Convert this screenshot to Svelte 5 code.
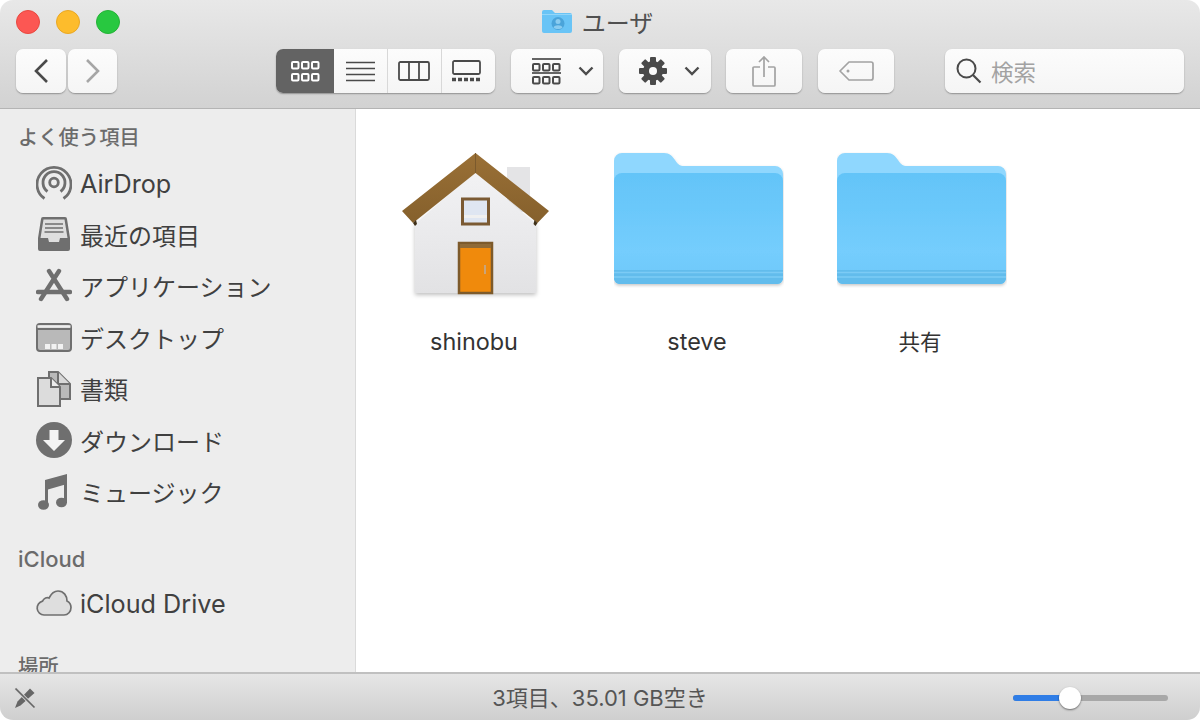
<script>
  const files = [
    { name: 'shinobu', kind: 'home', latin: true },
    { name: 'steve', kind: 'folder', latin: true },
    { name: '共有', kind: 'folder', latin: false }
  ];
</script>

{#snippet grid(y, fill)}
  <g fill={fill} stroke="currentColor" stroke-width="2">
    <rect x="1" y={y} width="6.5" height="6.5" rx="1" />
    <rect x="11" y={y} width="6.5" height="6.5" rx="1" />
    <rect x="21" y={y} width="6.5" height="6.5" rx="1" />
  </g>
{/snippet}

{#snippet chevron()}
  <svg class="chev" width="16" height="10" viewBox="0 0 16 10"><path d="M1.5 1.5 8 8l6.500-6.500" fill="none" stroke="#4c4c4c" stroke-width="2.400" /></svg>
{/snippet}

<div class="window">
  <header class="toolbar">
    <div class="titlerow">
      <div class="lights">
        <span class="light red"></span>
        <span class="light yellow"></span>
        <span class="light green"></span>
      </div>
      <div class="title">
        <svg width="32" height="26" viewBox="0 0 32 26">
          <path d="M1 4a2 2 0 0 1 2-2h8l3 3h15a2 2 0 0 1 2 2v16a2 2 0 0 1-2 2H3a2 2 0 0 1-2-2z" fill="#69c4f6" />
          <path d="M1 6h30v1H1z" fill="#93d6f9" />
          <circle cx="17" cy="15.500" r="6.500" fill="#4aa4da" />
          <circle cx="17" cy="13.500" r="2.500" fill="#8accf0" />
          <path d="M12.500 19.500c1-3 8-3 9 0-2 2-7 2-9 0z" fill="#8accf0" />
        </svg>
        <span>ユーザ</span>
      </div>
    </div>
    <div class="tools">
      <div class="navs">
        <button class="btn nav" aria-label="戻る">
          <svg width="16" height="26" viewBox="0 0 16 26"><path d="M14 2 3 13l11 11" fill="none" stroke="#4a4a4a" stroke-width="2.600" /></svg>
        </button>
        <button class="btn nav" aria-label="進む">
          <svg width="16" height="26" viewBox="0 0 16 26"><path d="M2 2l11 11L2 24" fill="none" stroke="#a6a6a6" stroke-width="2.600" /></svg>
        </button>
      </div>
      <div class="segments">
        <button class="seg active" aria-label="アイコン">
          <svg width="29" height="23" viewBox="0 0 29 23" color="#fff">
            {@render grid(2, 'none')}
            {@render grid(14, 'none')}
          </svg>
        </button>
        <button class="seg s2" aria-label="リスト">
          <svg width="29" height="21" viewBox="0 0 29 21"><path d="M0 1.500h29M0 7.500h29M0 13.500h29M0 19.500h29" stroke="#4a4a4a" stroke-width="1.700" /></svg>
        </button>
        <button class="seg s3" aria-label="カラム">
          <svg width="32" height="20" viewBox="0 0 32 20"><rect x="1" y="1" width="30" height="18" rx="1.500" fill="none" stroke="#4a4a4a" stroke-width="1.800" /><path d="M11 1v18M21 1v18" stroke="#4a4a4a" stroke-width="1.800" /></svg>
        </button>
        <button class="seg s4" aria-label="ギャラリー">
          <svg width="29" height="22" viewBox="0 0 29 22"><rect x="1" y="1" width="27" height="13" rx="1.500" fill="none" stroke="#4a4a4a" stroke-width="1.800" /><path d="M0 19.500h29" stroke="#4a4a4a" stroke-width="3.400" stroke-dasharray="4 2" /></svg>
        </button>
      </div>
      <button class="btn pop arrange" aria-label="グループ">
        <svg width="29" height="27" viewBox="0 0 29 27" color="#4a4a4a">
          <path d="M0 1h29" stroke="#4a4a4a" stroke-width="1.700" />
          {@render grid(6, 'none')}
          <path d="M0 15h29" stroke="#4a4a4a" stroke-width="1.700" />
          {@render grid(19, 'none')}
        </svg>
        {@render chevron()}
      </button>
      <button class="btn pop action" aria-label="アクション">
        <svg width="28" height="28" viewBox="0 0 28 28">
          <g fill="#4a4a4a">
            <circle cx="14" cy="14" r="10" />
            <rect x="11" y="0" width="6" height="28" rx="1" />
            <rect x="11" y="0" width="6" height="28" rx="1" transform="rotate(45 14 14)" />
            <rect x="11" y="0" width="6" height="28" rx="1" transform="rotate(90 14 14)" />
            <rect x="11" y="0" width="6" height="28" rx="1" transform="rotate(135 14 14)" />
          </g>
          <circle cx="14" cy="14" r="4" fill="#fafafa" />
        </svg>
        {@render chevron()}
      </button>
      <button class="btn share" aria-label="共有">
        <svg width="24" height="31" viewBox="0 0 24 31"><path d="M8 11H2a1 1 0 0 0-1 1v17a1 1 0 0 0 1 1h20a1 1 0 0 0 1-1V12a1 1 0 0 0-1-1h-6M12 21V1.500M7 6l5-5 5 5" fill="none" stroke="#a3a3a3" stroke-width="1.700" /></svg>
      </button>
      <button class="btn tag" aria-label="タグ">
        <svg width="35" height="20" viewBox="0 0 35 20"><path d="M10 1h22a2 2 0 0 1 2 2v14a2 2 0 0 1-2 2H10L1 10z" fill="none" stroke="#a3a3a3" stroke-width="1.700" stroke-linejoin="round" /><circle cx="9" cy="10" r="1.500" fill="#a3a3a3" /></svg>
      </button>
      <div class="search">
        <svg width="26" height="26" viewBox="0 0 26 26"><circle cx="10.500" cy="10.500" r="9" fill="none" stroke="#4a4a4a" stroke-width="2" /><path d="M17 17l7.500 7.500" stroke="#4a4a4a" stroke-width="2.200" /></svg>
        <span>検索</span>
      </div>
    </div>
  </header>

  <div class="body">
    <aside class="sidebar">
      <h2 class="first">よく使う項目</h2>
      <ul>
        <li>
          <svg width="36" height="36" viewBox="0 0 36 36" fill="none" stroke="#6f6f6f" stroke-width="2.800">
            <path d="M8.500 33.500a17 17 0 1 1 19 0" />
            <path d="M11.500 26.500a11 11 0 1 1 13 0" />
            <circle cx="18" cy="17.500" r="4.300" />
          </svg>
          <span class="latin">AirDrop</span>
        </li>
        <li>
          <svg width="36" height="36" viewBox="0 0 36 36">
            <path d="M7 1h22a2 2 0 0 1 2 2l3 19v11a2 2 0 0 1-2 2H4a2 2 0 0 1-2-2V22L5 3a2 2 0 0 1 2-2z" fill="#6f6f6f" />
            <path d="M7.500 3.500h21L31.500 22H24l-1 4H13l-1-4H4.500z" fill="#dedede" />
            <path d="M9 8h18M9 12h18M8.500 16h19" stroke="#6f6f6f" stroke-width="1.600" />
          </svg>
          <span>最近の項目</span>
        </li>
        <li>
          <svg width="36" height="36" viewBox="0 0 36 36" fill="none" stroke="#6f6f6f" stroke-linecap="round">
            <path d="M13 3l18 28M23 3 5 31" stroke-width="4.400" />
            <path d="M2 24h32" stroke-width="4.400" />
          </svg>
          <span>アプリケーション</span>
        </li>
        <li>
          <svg width="36" height="29" viewBox="0 0 36 29">
            <rect x="1" y="1" width="34" height="27" rx="3" fill="#b9b9b9" stroke="#6f6f6f" stroke-width="2" />
            <path d="M1 6h34" stroke="#6f6f6f" stroke-width="2" />
            <path d="M1.500 3.500h33" stroke="#ededed" stroke-width="2.500" />
            <rect x="9" y="21" width="5" height="5" fill="#f2f2f2" />
            <rect x="15.500" y="21" width="5" height="5" fill="#f2f2f2" />
            <rect x="22" y="21" width="5" height="5" fill="#f2f2f2" />
          </svg>
          <span>デスクトップ</span>
        </li>
        <li>
          <svg width="36" height="36" viewBox="0 0 36 36" stroke="#6f6f6f" stroke-width="2">
            <path d="M13 1h9l12 12v15H22V15H13z" fill="#b9b9b9" />
            <path d="M22 1v12h12" fill="#d8d8d8" />
            <path d="M2 7h13l9 9v19H2z" fill="#dcdcdc" />
            <path d="M15 7v9h9" fill="#ededed" />
          </svg>
          <span>書類</span>
        </li>
        <li>
          <svg width="36" height="36" viewBox="0 0 36 36">
            <circle cx="18" cy="18" r="18" fill="#6f6f6f" />
            <path d="M13.500 8h9v10h6.500L18 29 7 18h6.500z" fill="#f4f4f4" />
          </svg>
          <span>ダウンロード</span>
        </li>
        <li>
          <svg width="36" height="36" viewBox="0 0 36 36" fill="#6f6f6f">
            <path d="M9 6 31 0v10L12 15.500V32H9z" />
            <path d="M28 2h3v27h-3z" />
            <ellipse cx="7.500" cy="31" rx="5.500" ry="4.800" />
            <ellipse cx="25.500" cy="28.500" rx="5.500" ry="4.800" />
          </svg>
          <span>ミュージック</span>
        </li>
      </ul>
      <h2 class="cloud">iCloud</h2>
      <ul>
        <li class="drive">
          <svg width="36" height="26" viewBox="0 0 36 26"><path d="M8 25a7 7 0 0 1-1.500-13.800C8 8 11 7 13 8c2-4 5-7 9-7 6 0 9 5 9 10 3 1.500 4 4 4 6.500 0 4-3 7.500-7 7.500z" fill="#dedede" stroke="#6f6f6f" stroke-width="1.700" /></svg>
          <span class="latin">iCloud Drive</span>
        </li>
      </ul>
      <h2 class="places">場所</h2>
    </aside>

    <main class="content">
      {#each files as f}
        <figure class="file">
          <div class="icon">
            {#if f.kind === 'home'}
              <svg class="house" width="150" height="148" viewBox="0 0 150 148">
                <defs>
                  <linearGradient id="wall" x1="0" y1="0" x2="0" y2="1"><stop offset="0" stop-color="#f2f2f4" /><stop offset="1" stop-color="#e2e2e4" /></linearGradient>
                  <linearGradient id="roof" x1="0" y1="0" x2="0" y2="1"><stop offset="0" stop-color="#9a7036" /><stop offset="1" stop-color="#85602c" /></linearGradient>
                  <filter id="hs" x="-10%" y="-10%" width="120%" height="120%"><feDropShadow dx="0" dy="2" stdDeviation="2" flood-opacity="0.250" /></filter>
                </defs>
                <rect x="107" y="15" width="23" height="45" fill="#e4e4e6" />
                <path d="M75 20 136 72v69H15V72z" fill="url(#wall)" filter="url(#hs)" />
                <path d="M75.500 1 149 59l-11.500 12L75.500 21 13 71 2 59z" fill="url(#roof)" />
                <path d="M75.500 1v20" stroke="#7b5a2d" stroke-width="1" />
                <path d="M13 71l3-3 1 4-2 2zM137.500 71l-3-3-1 4 2 2z" fill="#3f3018" />
                <rect x="62.500" y="47" width="26" height="25" fill="#dfe6f2" stroke="#7b5a33" stroke-width="3" />
                <rect x="64" y="63" width="23" height="3" fill="#f0f0f0" />
                <rect x="59" y="91" width="33" height="50" fill="#f08a0c" stroke="#7d5a2b" stroke-width="2.500" />
                <rect x="60" y="92" width="31" height="4" fill="#8f6a37" />
                <rect x="84" y="113" width="2" height="9" fill="#c9a47a" />
              </svg>
            {:else}
              <svg width="170" height="136" viewBox="0 0 170 136">
                <defs>
                  <linearGradient id="ff{f.name}" x1="0" y1="0" x2="0" y2="1"><stop offset="0" stop-color="#63c4f8" /><stop offset="0.700" stop-color="#74cdfd" /><stop offset="1" stop-color="#6ec8f9" /></linearGradient>
                  <filter id="fs{f.name}" x="-5%" y="-5%" width="110%" height="115%"><feDropShadow dx="0" dy="1.500" stdDeviation="1.500" flood-opacity="0.220" /></filter>
                </defs>
                <g filter="url(#fs{f.name})">
                  <path d="M0 9a8 8 0 0 1 8-8h42c6 0 8 3 11 7 3 4 4 6 10 6h90a8 8 0 0 1 8 8v104a6 6 0 0 1-6 6H6a6 6 0 0 1-6-6z" fill="#8fd7fe" />
                  <path d="M0 29a8 8 0 0 1 8-8h153a8 8 0 0 1 8 8v97a6 6 0 0 1-6 6H6a6 6 0 0 1-6-6z" fill="url(#ff{f.name})" />
                  <path d="M0 118h169v8a6 6 0 0 1-6 6H6a6 6 0 0 1-6-6z" fill="#62bcec" />
                  <path d="M0 120.500h169M0 125h169" stroke="#7ccbf5" stroke-width="1.500" />
                </g>
              </svg>
            {/if}
          </div>
          <figcaption class:wide={f.latin}>{f.name}</figcaption>
        </figure>
      {/each}
    </main>
  </div>

  <footer class="status">
    <svg class="nopencil" width="22" height="22" viewBox="0 0 22 22" fill="none" stroke="#666">
      <path d="M16 1.500 20.500 6 6.500 18.500 1 21l2.500-6.500z" fill="#666" stroke="none" />
      <path d="M1.500 1.500l19 19" stroke="#d6d6d6" stroke-width="3.200" />
      <path d="M1.500 1.500l19 19" stroke-width="1.700" />
    </svg>
    <span class="count">3項目、35.01 GB空き</span>
    <div class="slider">
      <div class="track"><div class="fill"></div></div>
      <div class="thumb"></div>
    </div>
  </footer>
</div>

<style>
  :global(body) {
    margin: 0;
    background: #fff;
  }
  .window {
    width: 1200px;
    height: 720px;
    display: flex;
    flex-direction: column;
    overflow: hidden;
    border-radius: 13px;
    background: #fff;
    font-family: Inter, "Noto Sans CJK JP", sans-serif;
    color: #3c3c3c;
  }
  .toolbar {
    height: 109px;
    flex: none;
    box-sizing: border-box;
    background: linear-gradient(#e8e8e8, #d2d2d2);
    border-bottom: 1px solid #b4b4b4;
    display: flex;
    flex-direction: column;
  }
  .titlerow {
    height: 49px;
    flex: none;
    position: relative;
  }
  .lights {
    position: absolute;
    left: 16px;
    top: 10px;
    display: flex;
    gap: 16px;
  }
  .light {
    width: 24px;
    height: 24px;
    border-radius: 50%;
    box-sizing: border-box;
  }
  .red { background: #fc5753; border: 1px solid #e8483f; }
  .yellow { background: #fdbc2c; border: 1px solid #e9a723; }
  .green { background: #28c840; border: 1px solid #25b237; }
  .title {
    height: 42px;
    display: flex;
    align-items: center;
    justify-content: center;
    gap: 9px;
    font-size: 24px;
    color: #505050;
    padding-right: 6px;
  }
  .tools {
    display: flex;
    padding-left: 16px;
    height: 44px;
  }
  button {
    padding: 0;
    margin: 0;
    font: inherit;
    border: 0;
    display: flex;
    align-items: center;
    justify-content: center;
  }
  .btn, .segments, .search {
    background: linear-gradient(#fcfcfc, #f5f5f5);
    border-radius: 7px;
    box-shadow: 0 1px 1.500px rgba(0, 0, 0, 0.32);
    height: 44px;
    box-sizing: border-box;
  }
  .navs {
    display: flex;
    gap: 2px;
    margin-right: 159px;
  }
  .nav {
    width: 50px;
  }
  .nav:last-child { width: 49px; }
  .segments {
    width: 219px;
    display: flex;
    overflow: hidden;
    margin-right: 16px;
  }
  .seg {
    background: transparent;
    height: 44px;
    border-left: 1px solid #d8d8d8;
    color: #4a4a4a;
    box-sizing: border-box;
  }
  .active {
    width: 58px;
    background: #636363;
    border-left: 0;
  }
  .s2 { width: 53px; border-left: 0; }
  .s3 { width: 54px; padding-right: 2px; }
  .s4 { width: 54px; padding-right: 4px; }
  .pop {
    width: 92px;
    gap: 17px;
    box-sizing: border-box;
  }
  .arrange { margin-right: 16px; padding-left: 12px; }
  .action { margin-right: 15px; padding-left: 8px; }
  .share { width: 76px; margin-right: 16px; }
  .tag { width: 76px; margin-right: 51px; }
  .search {
    width: 239px;
    display: flex;
    align-items: center;
    padding-left: 11px;
    gap: 9px;
    font-size: 22.500px;
    color: #a2a2a2;
  }
  .body {
    flex: 1;
    min-height: 0;
    display: flex;
  }
  .sidebar {
    width: 356px;
    flex: none;
    box-sizing: border-box;
    background: #ededed;
    border-right: 1px solid #dadada;
    overflow: hidden;
    padding-top: 16px;
  }
  h2 {
    margin: 0 0 0 18px;
    font-size: 20.300px;
    font-weight: 500;
    line-height: 26px;
    color: #6b6b6b;
  }
  ul {
    list-style: none;
    margin: 0;
    padding: 0;
  }
  .first { margin-bottom: 6px; }
  li {
    height: 51.500px;
    display: flex;
    align-items: center;
    padding-left: 36px;
    gap: 8px;
    font-size: 24px;
    color: #404040;
  }
  li svg { flex: none; }
  li span { white-space: nowrap; }
  .latin { font-size: 25.200px; padding-top: 2px; }
  .cloud { margin-top: 28px; margin-bottom: 9px; font-size: 22px; }
  .drive { height: 44px; }
  .places { margin-top: 29px; }
  .content {
    flex: 1;
    display: flex;
    align-items: flex-start;
    padding: 43px 0 0 8px;
    background: #fff;
  }
  .file {
    width: 223px;
    margin: 0;
    display: flex;
    flex-direction: column;
    align-items: center;
  }
  .icon {
    height: 148px;
    display: flex;
    justify-content: center;
  }
  .house { margin-right: 2px; }
  figcaption {
    margin-top: 26px;
    font-size: 21.500px;
    line-height: 32px;
    color: #333;
    padding-right: 3px;
  }
  .wide { font-size: 23.400px; }
  .status {
    height: 48px;
    flex: none;
    box-sizing: border-box;
    border-top: 2px solid #c0c0c0;
    background: linear-gradient(#e6e6e6, #cfcfcf);
    position: relative;
    display: flex;
    align-items: center;
    justify-content: center;
    padding-bottom: 3px;
  }
  .nopencil {
    position: absolute;
    left: 14px;
    top: 13px;
  }
  .count {
    font-size: 22px;
    color: #555;
  }
  .slider {
    position: absolute;
    left: 1013px;
    top: 13px;
    width: 155px;
    height: 22px;
    display: flex;
    align-items: center;
  }
  .track {
    width: 100%;
    height: 6px;
    border-radius: 3px;
    background: #a8a8a8;
    overflow: hidden;
  }
  .fill {
    width: 50px;
    height: 100%;
    background: #2f7de6;
  }
  .thumb {
    position: absolute;
    left: 46px;
    top: 0;
    width: 22px;
    height: 22px;
    border-radius: 50%;
    background: #fff;
    box-shadow: 0 1px 2px rgba(0, 0, 0, 0.5);
  }
</style>
